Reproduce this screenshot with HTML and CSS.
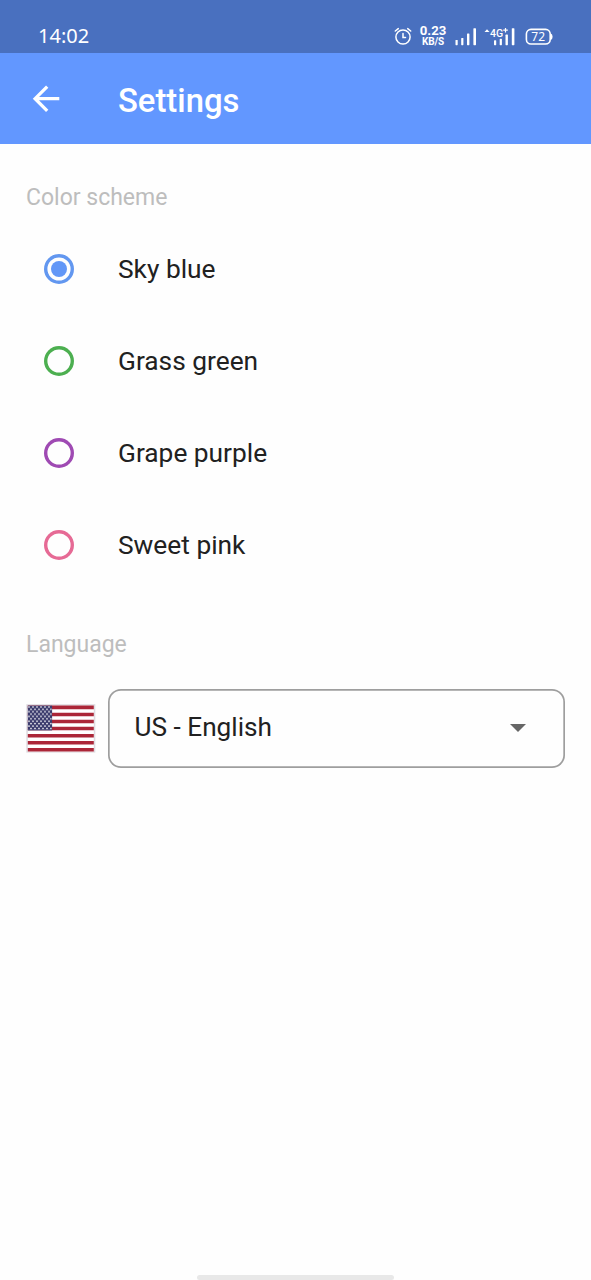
FILE: index.html
```html
<!DOCTYPE html>
<html lang="en">
<head>
<meta charset="utf-8">
<title>Settings</title>
<link rel="stylesheet" href="styles.css">
</head>
<body>
<div class="status-bar">
  <span class="clock">14:02</span>
  <div class="indicators">
    <svg class="alarm" width="18" height="20" viewBox="0 0 18 20" fill="none" stroke="#fff" stroke-width="1.5" stroke-linecap="round">
      <circle cx="9" cy="11" r="7.1"/>
      <path d="M9 7.5V11.5H11.5M1.3 5L4.3 2.6M16.7 5L13.7 2.6"/>
    </svg>
    <div class="speed"><span class="rate">0.23</span><span class="unit">KB/S</span></div>
    <svg class="signal" width="22" height="20" viewBox="0 0 22 20" fill="#fff">
      <rect x="0.5" y="14" width="2.2" height="5.2" rx="0.6"/>
      <rect x="6.2" y="12" width="2.2" height="7.2" rx="0.6"/>
      <rect x="12" y="7.5" width="2.4" height="11.7" rx="0.6"/>
      <rect x="18.4" y="2.2" width="2.6" height="17" rx="0.6"/>
    </svg>
    <svg class="signal-4g" width="32" height="20" viewBox="0 0 32 20" fill="#fff">
      <path d="M0.5 6L3 3.2L5.5 6Z"/>
      <rect x="10" y="14.2" width="2.2" height="5" rx="0.6"/>
      <rect x="15.7" y="12.8" width="2.2" height="6.4" rx="0.6"/>
      <rect x="21.5" y="8.6" width="2.4" height="10.6" rx="0.6"/>
      <rect x="27.8" y="2.2" width="2.6" height="17" rx="0.6"/>
      <text class="network" x="6.1" y="11">4G</text>
      <path d="M19.2 4.2H23.8M21.5 1.9V6.5" stroke="#fff" stroke-width="1.2"/>
    </svg>
    <svg class="battery" width="28" height="20" viewBox="0 0 28 20">
      <rect x="1.4" y="3.4" width="23.8" height="14.6" rx="4.6" fill="none" stroke="#fff" stroke-width="1.6"/>
      <path d="M25.5 7.3Q27.6 8.2 27.6 10.8T25.5 14.2Z" fill="#fff"/>
      <text class="charge" x="13.2" y="15.2" text-anchor="middle">72</text>
    </svg>
  </div>
</div>
<header class="app-bar">
  <svg class="back" width="28" height="28" viewBox="0 0 28 28" fill="none" stroke="#fff" stroke-width="3.3">
    <path d="M27.3 13.7H3.5M15.2 1.6L3.1 13.7L15.2 25.8"/>
  </svg>
  <h1 class="title">Settings</h1>
</header>
<main class="content">
  <h2 class="section-label">Color scheme</h2>
  <div class="options">
    <label class="option blue"><span class="radio checked"></span>Sky blue</label>
    <label class="option green"><span class="radio"></span>Grass green</label>
    <label class="option purple"><span class="radio"></span>Grape purple</label>
    <label class="option pink"><span class="radio"></span>Sweet pink</label>
  </div>
  <h2 class="section-label language-label">Language</h2>
  <div class="language">
    <svg class="flag" width="70" height="50" viewBox="0 0.8 70 50">
      <defs>
        <pattern id="stars" x="2" y="2.6" width="4" height="4.8" patternUnits="userSpaceOnUse">
          <circle cx="1" cy="1" r="0.85" fill="#fff"/>
          <circle cx="3" cy="3.4" r="0.85" fill="#fff"/>
        </pattern>
      </defs>
      <rect x="0.3" y="1" width="69" height="48.4" fill="#dedbe0"/>
      <rect x="1.8" y="2.4" width="66" height="46" fill="#fff"/>
      <path stroke="#ab2638" stroke-width="3.54" d="M1.8 4.17H67.8M1.8 11.25H67.8M1.8 18.33H67.8M1.8 25.4H67.8M1.8 32.48H67.8M1.8 39.55H67.8M1.8 46.63H67.8"/>
      <rect x="1.8" y="2.4" width="24.3" height="24.8" fill="#3b3b6d"/>
      <rect x="1.8" y="2.4" width="24" height="24.4" fill="url(#stars)"/>
    </svg>
    <div class="select">
      <span>US - English</span>
      <svg width="16" height="9" viewBox="0 0 16 9"><path d="M0 1H16L8 9Z" fill="#666"/></svg>
    </div>
  </div>
</main>
<div class="home-indicator"></div>
</body>
</html>
```
FILE: styles.css
```css
* { box-sizing: border-box; }

body {
  margin: 0;
  height: 1280px;
  display: flex;
  flex-direction: column;
  background: #fefefe;
  color: #212121;
  font-family: Roboto, sans-serif;
  overflow: hidden;
}

.status-bar {
  height: 53px;
  padding: 18px 38px 0;
  display: flex;
  justify-content: space-between;
  align-items: center;
  background: #4970bf;
  color: #fff;
}

.clock {
  font: 20px/32px "Noto Sans", sans-serif;
}

.indicators {
  display: flex;
  align-items: center;
  height: 20px;
}

.speed {
  display: flex;
  flex-direction: column;
  align-items: center;
  width: 28px;
  margin: 0 9px 0 7px;
  font-weight: 700;
}

.rate { font-size: 13.2px; line-height: 12px; }
.unit { font-size: 10px; line-height: 9px; letter-spacing: -0.2px; }
.signal { margin: 0 8px 0 -1px; }
.signal-4g { margin: 0 9px 0 -1px; }
.network { font: 500 10.5px Roboto, sans-serif; }
.charge { font: 12px "Noto Sans", sans-serif; fill: #fff; }

.app-bar {
  height: 91px;
  padding-left: 32px;
  display: flex;
  align-items: center;
  background: #6297ff;
  color: #fff;
}

.title {
  margin: 4px 0 0 58px;
  font-size: 32.8px;
  font-weight: 500;
  line-height: 40px;
}

.content {
  padding: 40px 26px 0;
}

.section-label {
  margin: 0;
  font-size: 23px;
  font-weight: 400;
  line-height: 28px;
  color: #bdbdbd;
}

.options { padding-top: 11px; }

.option {
  display: flex;
  align-items: center;
  height: 92px;
  padding-left: 18px;
  gap: 44px;
  font-size: 26.3px;
}

.radio {
  width: 30px;
  height: 30px;
  display: grid;
  place-items: center;
  border-radius: 50%;
  box-shadow: inset 0 0 0 3.4px currentColor;
}

.checked::after {
  content: "";
  width: 16px;
  height: 16px;
  border-radius: 50%;
  background: #6297f7;
}

.blue .radio { color: #6297f0; }
.green .radio { color: #4caf50; }
.purple .radio { color: #9f4ab3; }
.pink .radio { color: #e66a95; }

.language-label { margin-top: 40px; }

.language {
  display: flex;
  align-items: center;
  margin-top: 30px;
  gap: 12px;
}

.select {
  flex: 1;
  height: 79px;
  padding: 0 39px 3px 26.5px;
  display: flex;
  align-items: center;
  justify-content: space-between;
  border-radius: 13px;
  box-shadow: inset 0 0 0 1.7px #9e9e9e;
  font-size: 26.2px;
}

.home-indicator {
  width: 197px;
  height: 5px;
  margin: auto auto 0;
  border-radius: 3px;
  background: #e8e8e8;
}
```
